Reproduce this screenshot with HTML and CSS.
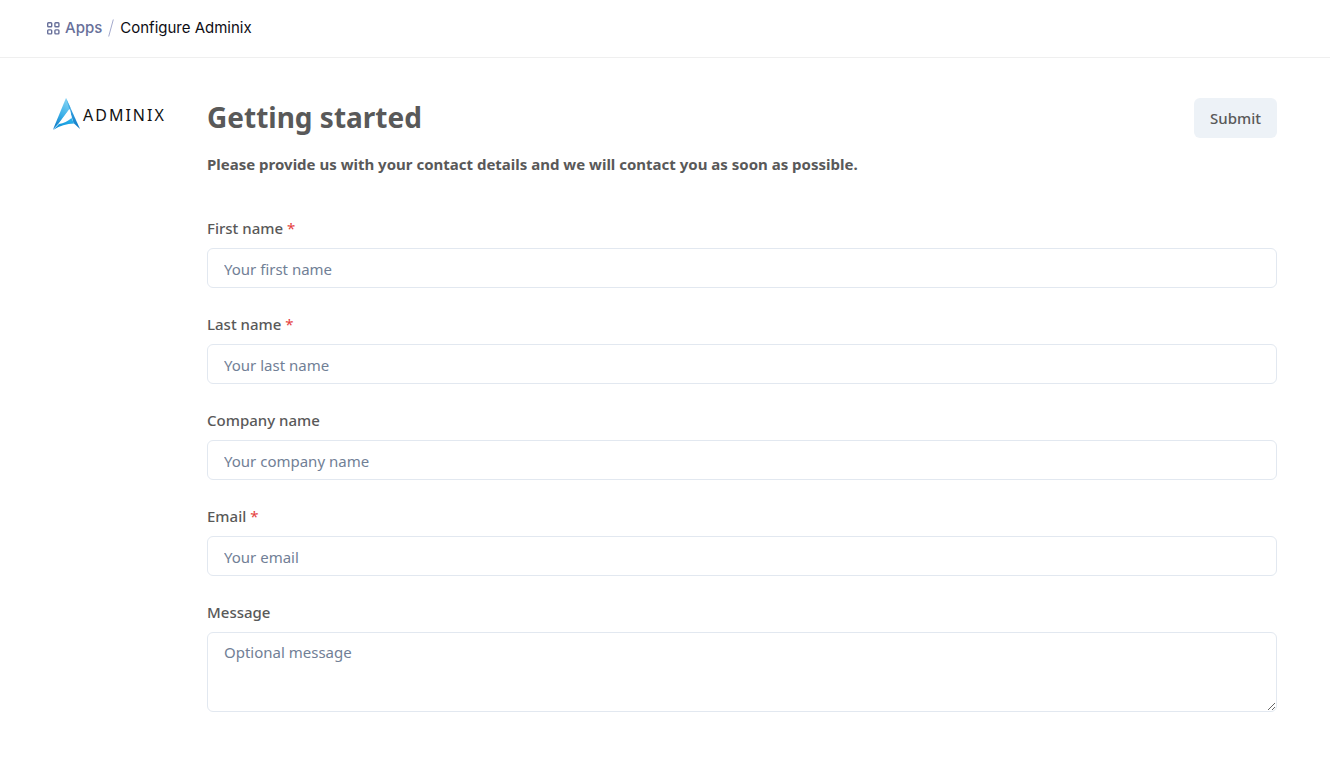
FILE: index.html
```html
<!DOCTYPE html>
<html lang="en">
<head>
<meta charset="utf-8">
<meta name="viewport" content="width=device-width, initial-scale=1">
<title>Configure Adminix</title>
<link rel="stylesheet" href="styles.css">
</head>
<body>
<header class="topbar">
  <nav class="breadcrumb" aria-label="Breadcrumb">
    <a class="crumb-link" href="#">
      <svg class="apps-icon" viewBox="0 0 13 13" width="13" height="13" fill="none" stroke="currentColor" stroke-width="1.4" aria-hidden="true">
        <rect x="0.7" y="0.7" width="4" height="4" rx="0.8"/>
        <rect x="7.9" y="0.7" width="4" height="4" rx="0.8"/>
        <rect x="0.7" y="7.9" width="4" height="4" rx="0.8"/>
        <rect x="7.9" y="7.9" width="4" height="4" rx="0.8"/>
      </svg>
      <span>Apps</span>
    </a>
    <svg class="crumb-slash" viewBox="0 0 6 18" width="6" height="18" fill="none" stroke="currentColor" aria-hidden="true"><path d="M5.3 0.5 0.7 17.5"/></svg>
    <span class="crumb-current" aria-current="page">Configure Adminix</span>
  </nav>
</header>
<main class="page">
  <div class="logo">
    <svg class="logo-mark" viewBox="0 0 27 32" width="27" height="32" aria-hidden="true">
      <defs>
        <linearGradient id="left" x1="0.6" y1="0" x2="0.2" y2="1">
          <stop offset="0" stop-color="#7fd0f2"/>
          <stop offset="0.5" stop-color="#3bb0e8"/>
          <stop offset="1" stop-color="#0876c4"/>
        </linearGradient>
        <linearGradient id="right" x1="0" y1="0" x2="1" y2="1">
          <stop offset="0" stop-color="#52b8ea"/>
          <stop offset="0.5" stop-color="#2796da"/>
          <stop offset="1" stop-color="#0a73bf"/>
        </linearGradient>
        <linearGradient id="base" x1="0" y1="1" x2="1" y2="0">
          <stop offset="0" stop-color="#0788d4"/>
          <stop offset="1" stop-color="#2fb6ee"/>
        </linearGradient>
      </defs>
      <path fill="url(#left)" d="M13 0 0 31.500 6 25 17.500 9.500Z"/>
      <path fill="url(#right)" d="M13 0 27 31 20.500 25 16 10Z"/>
      <path fill="#fff" d="M17 11 6 25.500Q13 24 18.500 19Z"/>
      <path fill="url(#base)" d="M0 32 6 26Q13 25 18.500 20L21 25.500Q10 25.500 0 32Z"/>
    </svg>
    <span class="logo-name">ADMINIX</span>
  </div>
  <form class="form">
    <div class="form-head">
      <h1 class="title">Getting started</h1>
      <button class="submit" type="submit">Submit</button>
    </div>
    <p class="intro">Please provide us with your contact details and we will contact you as soon as possible.</p>
    <div class="field">
      <label for="first">First name <span class="required">*</span></label>
      <input id="first" type="text" placeholder="Your first name" required>
    </div>
    <div class="field">
      <label for="last">Last name <span class="required">*</span></label>
      <input id="last" type="text" placeholder="Your last name" required>
    </div>
    <div class="field">
      <label for="company">Company name</label>
      <input id="company" type="text" placeholder="Your company name">
    </div>
    <div class="field">
      <label for="email">Email <span class="required">*</span></label>
      <input id="email" type="email" placeholder="Your email" required>
    </div>
    <div class="field">
      <label for="message">Message</label>
      <textarea id="message" placeholder="Optional message"></textarea>
    </div>
  </form>
</main>
</body>
</html>
```
FILE: styles.css
```css
* { box-sizing: border-box; }
body {
  margin: 0;
  background: #fff;
  color: #595959;
  font: 400 15px/24px "Segoe UI", "Noto Sans", sans-serif;
}
.topbar {
  border-bottom: 1px solid #efefef;
  padding: 16px 47px 17px;
}
.breadcrumb, .crumb-link { display: flex; align-items: center; }
.breadcrumb {
  gap: 6px;
  font-family: Inter, sans-serif;
}
.crumb-link {
  gap: 5px;
  color: #68709a;
  font-weight: 500;
  text-decoration: none;
}
.crumb-slash { color: #a3a9cc; }
.crumb-current { color: #0d0d14; }
.page {
  display: flex;
  align-items: flex-start;
  gap: 43px;
  padding: 40px 53px;
}
.logo {
  display: flex;
  flex: none;
  align-items: flex-start;
  gap: 3px;
  width: 111px;
}
.logo-mark { flex: none; }
.logo-name {
  color: #111;
  font: 400 16px/34px "Noto Sans", sans-serif;
  letter-spacing: 2px;
}
.form { flex: 1; min-width: 0; }
.form-head {
  display: flex;
  justify-content: space-between;
  align-items: flex-start;
}
.title {
  margin: 0;
  font-size: 28px;
  line-height: 38px;
  font-weight: 700;
}
.submit {
  height: 40px;
  padding: 0 16px;
  border: 0;
  border-radius: 6px;
  background: #edf2f7;
  color: #595959;
  font: inherit;
  font-weight: 500;
  cursor: pointer;
}
.intro {
  margin: 14px 0 40px;
  font-weight: 700;
}
.field { margin-bottom: 24px; }
.field label {
  display: block;
  margin-bottom: 8px;
  font-weight: 500;
}
.required { color: #e53e3e; font-weight: 400; }
.field input, .field textarea {
  display: block;
  width: 100%;
  height: 40px;
  padding: 2px 16px 0;
  border: 1px solid #e2e8f0;
  border-radius: 6px;
  background: #fff;
  color: inherit;
  font: inherit;
}
.field textarea {
  height: 80px;
  padding: 7px 16px;
  resize: vertical;
}
.field input::placeholder, .field textarea::placeholder { color: #718096; opacity: 1; }
```
